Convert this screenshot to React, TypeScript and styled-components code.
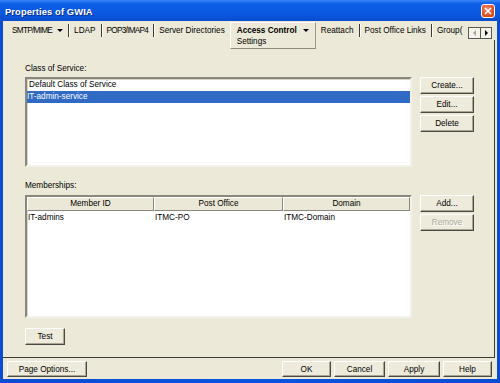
import { Fragment } from 'react';
import styled, { createGlobalStyle } from 'styled-components';

const GlobalStyle = createGlobalStyle`
    body {
        margin: 0;
        font-family: "Liberation Sans", Arial, sans-serif;
        font-size: 8.2px;
        color: #000;
    }
    * {
        box-sizing: border-box;
    }
`;

const Window = styled.div`
    width: 500px;
    height: 383px;
    display: flex;
    flex-direction: column;
    background: linear-gradient(to right, #0A4CD2 0%, #0B55E0 50%, #0A4CD2 100%);
`;

const TitleBar = styled.div`
    height: 21px;
    flex-shrink: 0;
    display: flex;
    align-items: center;
    justify-content: space-between;
    padding: 1px 5px 0 5px;
    background: linear-gradient(to bottom, #3A86F5 0%, #0D5EE6 18%, #0A56DF 70%, #0A4DCC 100%);
`;

const TitleText = styled.span`
    color: #fff;
    font-weight: bold;
    font-size: 9.4px;
    letter-spacing: 0.1px;
    text-shadow: 1px 1px #0B2C8A;
`;

const CloseButton = styled.div`
    width: 14px;
    height: 14px;
    border: 1px solid #fff;
    border-radius: 3px;
    background: radial-gradient(circle at 40% 35%, #F08C6C 0%, #E0532C 55%, #C8401C 100%);
    display: flex;
    align-items: center;
    justify-content: center;
`;

const Body = styled.div`
    flex: 1;
    min-height: 0;
    margin: 0 3px 4px 3px;
    background: #ECE9D8;
    display: flex;
    flex-direction: column;
`;

const TabStrip = styled.div`
    height: 19px;
    flex-shrink: 0;
    display: flex;
    align-items: flex-start;
    padding: 1px 5px 0 4px;
    position: relative;
    z-index: 1;
`;

const TabScroller = styled.div`
    flex: 1;
    min-width: 0;
    display: flex;
    align-items: flex-start;
    overflow: hidden;
    height: 30px;
`;

const Tab = styled.div<{ $spacing?: number }>`
    height: 17px;
    display: flex;
    align-items: center;
    gap: 5px;
    padding: 0 5px;
    white-space: nowrap;
    flex-shrink: 0;
    letter-spacing: ${p => p.$spacing ?? 0}px;
`;

const TabSeparator = styled.div`
    width: 1px;
    height: 13px;
    margin-top: 2px;
    flex-shrink: 0;
    background: #3C3B36;
    box-shadow: 1px 0 #fff;
`;

const ActiveTab = styled.div`
    display: flex;
    flex-direction: column;
    flex-shrink: 0;
    height: 27px;
    padding: 2px 6px 0 6px;
    border: 1px solid;
    border-color: #fff #9C9A8E #8E8C80 #fff;
    background: #ECE9D8;
    line-height: 11px;
    white-space: nowrap;
`;

const ActiveTabTitle = styled.div`
    display: flex;
    align-items: center;
    gap: 6px;
    font-weight: bold;
`;

const Caret = styled.span`
    width: 0;
    height: 0;
    border-left: 3px solid transparent;
    border-right: 3px solid transparent;
    border-top: 3px solid #000;
`;

const ArrowBox = styled.div`
    display: flex;
    margin-top: 5px;
    margin-left: 4px;
    border: 1px solid #5A5950;
    flex-shrink: 0;
`;

const ArrowButton = styled.div<{ $disabled?: boolean }>`
    width: 11px;
    height: 10px;
    background: #F4F3EC;
    display: flex;
    align-items: center;
    justify-content: center;
    & + & {
        border-left: 1px solid #5A5950;
    }
    span {
        width: 0;
        height: 0;
        border-top: 3px solid transparent;
        border-bottom: 3px solid transparent;
    }
    .left {
        border-right: 3px solid ${p => (p.$disabled ? '#A8A595' : '#000')};
    }
    .right {
        border-left: 3px solid ${p => (p.$disabled ? '#A8A595' : '#000')};
    }
`;

const Panel = styled.div`
    flex: 1;
    min-height: 0;
    margin-right: 2px;
    border-right: 1px solid #3C3B36;
    border-bottom: 1px solid #3C3B36;
    padding: 23px 0 0 22px;
    display: flex;
    flex-direction: column;
`;

const Section = styled.section<{ $top?: number }>`
    display: grid;
    grid-template-columns: 387px 54px;
    column-gap: 8px;
    margin-top: ${p => p.$top ?? 0}px;
`;

const Label = styled.div<{ $below: number }>`
    grid-column: 1 / -1;
    height: 11px;
    line-height: 11px;
    margin-bottom: ${p => p.$below}px;
`;

const Sunken = styled.div<{ $height: number }>`
    height: ${p => p.$height}px;
    border: 2px solid;
    border-color: #8A887E #F2F1EA #F2F1EA #8A887E;
    box-shadow: inset 1px 1px #D6D3C6;
    background: #fff;
    overflow: hidden;
`;

const ListItem = styled.div<{ $selected?: boolean }>`
    height: 12px;
    line-height: 12px;
    padding-left: ${p => (p.$selected ? 0 : 2)}px;
    background: ${p => (p.$selected ? '#316AC5' : 'transparent')};
    color: ${p => (p.$selected ? '#fff' : '#000')};
`;

const TableHeader = styled.div`
    display: grid;
    grid-template-columns: 127px 129px 127px;
`;

const HeaderCell = styled.div`
    height: 14px;
    line-height: 12px;
    text-align: center;
    background: #EBE8D7;
    border: 1px solid;
    border-color: #fff #8A887E #8A887E #fff;
`;

const TableRow = styled.div`
    display: grid;
    grid-template-columns: 127px 129px 127px;
    height: 12px;
    line-height: 12px;
    margin-top: 1px;
`;

const Cell = styled.div`
    padding-left: 1px;
    white-space: nowrap;
`;

const ButtonStack = styled.div`
    display: flex;
    flex-direction: column;
    gap: 2px;
`;

const Button = styled.button<{ $width?: number; $height?: number }>`
    width: ${p => p.$width ?? 54}px;
    height: ${p => p.$height ?? 17}px;
    padding: 0;
    font: inherit;
    color: #000;
    background: #EEEBDC;
    border: 1px solid;
    border-color: #fff #4A4942 #4A4942 #fff;
    box-shadow: inset -1px -1px #A8A595;

    &:disabled {
        color: #ACA899;
        text-shadow: 1px 1px #fff;
    }
`;

const TestRow = styled.div`
    margin-top: 10px;
`;

const Footer = styled.div`
    height: 21px;
    flex-shrink: 0;
    display: flex;
    align-items: flex-start;
    gap: 3px;
    padding: 3px 5px 0 4px;
`;

const FooterSpacer = styled.div`
    flex: 1;
`;

type TTab = { label: string; menu?: boolean; spacing?: number };

const tabsBefore: TTab[] = [
    { label: 'SMTP/MIME', menu: true, spacing: -0.7 },
    { label: 'LDAP' },
    { label: 'POP3/IMAP4', spacing: -0.7 },
    { label: 'Server Directories' },
];

const tabsAfter: TTab[] = [
    { label: 'Reattach' },
    { label: 'Post Office Links' },
    { label: 'Group(' },
];

function TabGroup({ tabs }: { tabs: TTab[] }) {
    return (
        <>
            {tabs.map((t, i) => (
                <Fragment key={t.label}>
                    <Tab $spacing={t.spacing}>
                        {t.label}
                        {t.menu && <Caret />}
                    </Tab>
                    {i < tabs.length - 1 && <TabSeparator />}
                </Fragment>
            ))}
        </>
    );
}

export default function App() {
    return (
        <>
            <GlobalStyle />
            <Window>
                <TitleBar>
                    <TitleText>Properties of GWIA</TitleText>
                    <CloseButton>
                        <svg width="8" height="8" viewBox="0 0 8 8">
                            <path d="M1 1 L7 7 M7 1 L1 7" stroke="#fff" strokeWidth="1.6" />
                        </svg>
                    </CloseButton>
                </TitleBar>
                <Body>
                    <TabStrip>
                        <TabScroller>
                            <TabGroup tabs={tabsBefore} />
                            <ActiveTab>
                                <ActiveTabTitle>
                                    Access Control
                                    <Caret />
                                </ActiveTabTitle>
                                <div>Settings</div>
                            </ActiveTab>
                            <TabGroup tabs={tabsAfter} />
                        </TabScroller>
                        <ArrowBox>
                            <ArrowButton $disabled>
                                <span className="left" />
                            </ArrowButton>
                            <ArrowButton>
                                <span className="right" />
                            </ArrowButton>
                        </ArrowBox>
                    </TabStrip>
                    <Panel>
                        <Section>
                            <Label $below={3}>Class of Service:</Label>
                            <Sunken $height={90}>
                                <ListItem>Default Class of Service</ListItem>
                                <ListItem $selected>IT-admin-service</ListItem>
                            </Sunken>
                            <ButtonStack>
                                <Button>Create...</Button>
                                <Button>Edit...</Button>
                                <Button>Delete</Button>
                            </ButtonStack>
                        </Section>
                        <Section $top={13}>
                            <Label $below={4}>Memberships:</Label>
                            <Sunken $height={123}>
                                <TableHeader>
                                    <HeaderCell>Member ID</HeaderCell>
                                    <HeaderCell>Post Office</HeaderCell>
                                    <HeaderCell>Domain</HeaderCell>
                                </TableHeader>
                                <TableRow>
                                    <Cell>IT-admins</Cell>
                                    <Cell>ITMC-PO</Cell>
                                    <Cell>ITMC-Domain</Cell>
                                </TableRow>
                            </Sunken>
                            <ButtonStack>
                                <Button>Add...</Button>
                                <Button disabled>Remove</Button>
                            </ButtonStack>
                        </Section>
                        <TestRow>
                            <Button $width={40}>Test</Button>
                        </TestRow>
                    </Panel>
                    <Footer>
                        <Button $width={80} $height={16}>Page Options...</Button>
                        <FooterSpacer />
                        <Button $width={49} $height={16}>OK</Button>
                        <Button $width={51} $height={16}>Cancel</Button>
                        <Button $width={52} $height={16}>Apply</Button>
                        <Button $width={49} $height={16}>Help</Button>
                    </Footer>
                </Body>
            </Window>
        </>
    );
}
